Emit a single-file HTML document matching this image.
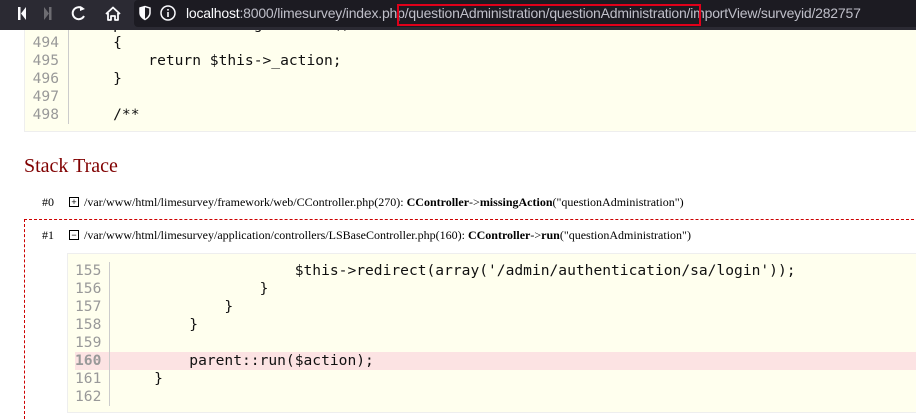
<!DOCTYPE html>
<html><head><meta charset="utf-8">
<style>
*{margin:0;padding:0;box-sizing:border-box}
body{width:916px;height:403px;overflow:hidden;background:#fff;position:relative;font-family:"Liberation Serif",serif}
.tb{position:absolute;left:0;top:0;width:916px;height:30px;background:#2b2a33;z-index:5;overflow:hidden}
.url{position:absolute;left:134px;top:0;width:782px;height:27px;background:#1c1b22;border-radius:4px 0 0 4px}
.urltext{position:absolute;left:186px;top:5px;font:14px "Liberation Sans",sans-serif;color:#bfbfc9;white-space:nowrap;letter-spacing:-0.2px}
.urltext b{font-weight:normal;color:#fbfbfe}
.redbox{position:absolute;left:397px;top:4px;width:304px;height:22px;border:2px solid #e0001a}
.code{position:absolute;background:#ffffee;border:1px solid #eeeeee;font-family:"DejaVu Sans Mono","Liberation Mono",monospace;font-size:14.6px;overflow:hidden}
.ln{position:absolute;left:0;height:18px;line-height:18px;white-space:pre;width:2000px}
.ln .n{display:inline-block;color:#999;text-align:right;border-right:1px solid #ccc;padding-right:9px;margin-right:9px}
.ln .c{color:#111}
.hl{background:#fce3e3}
.hl .n{font-weight:bold}
h1{position:absolute;left:24px;top:155px;font:normal 20px "Liberation Serif",serif;color:#800000}
.tr{position:absolute;font-size:12px;color:#000;white-space:nowrap}
.pm{display:inline-block;width:10px;height:10px;border:1px solid #000;position:absolute;font:9px/8px "Liberation Sans",sans-serif;text-align:center}
</style></head><body>
<div class="tb">
 <svg width="130" height="28" style="position:absolute;left:0;top:0">
  <g fill="#fbfbfe"><rect x="18" y="7" width="2.5" height="13"/><path d="M26 7 L21 13.5 L26 20 Z"/></g>
  <g fill="#6d6c72"><rect x="49" y="7" width="2.5" height="13"/><path d="M44 7 L49 13.5 L44 20 Z"/></g>
  <path d="M83 9 A6 6 0 1 0 84 16" fill="none" stroke="#fbfbfe" stroke-width="2"/><path d="M80 6 L85 9 L80 11 Z" fill="#fbfbfe"/>
  <path d="M106 14 L113 7.5 L120 14 M108 13 V20 H111 V16 H115 V20 H118 V13" fill="none" stroke="#fbfbfe" stroke-width="1.8" stroke-linejoin="round"/>
 </svg>
 <div class="url"></div>
 <svg width="60" height="28" style="position:absolute;left:134px;top:0">
  <path d="M6 8 L11 6.5 L16 8 V13 C16 16 13 18.5 11 19.5 C9 18.5 6 16 6 13 Z" fill="none" stroke="#fbfbfe" stroke-width="1.5"/>
  <path d="M11 7 V19 C9 18 6.5 16 6.5 13 V8.5 Z" fill="#fbfbfe"/>
  <circle cx="34" cy="13" r="7" fill="none" stroke="#fbfbfe" stroke-width="1.5"/>
  <rect x="33.2" y="12" width="1.6" height="5" fill="#fbfbfe"/><rect x="33.2" y="9" width="1.6" height="1.6" fill="#fbfbfe"/>
 </svg>
 <div class="urltext"><b>localhost</b>:8000/limesurvey/index.php/questionAdministration/questionAdministration/importView/surveyid/282757</div>
 <div class="redbox"></div>
</div>

<div class="code" style="left:24px;top:10px;width:900px;height:122px">
 <div class="ln" style="top:5px"><span class="n" style="width:44px">493</span><span class="c">    public function getAction()</span></div>
 <div class="ln" style="top:23px"><span class="n" style="width:44px">494</span><span class="c">    {</span></div>
 <div class="ln" style="top:41px"><span class="n" style="width:44px">495</span><span class="c">        return $this-&gt;_action;</span></div>
 <div class="ln" style="top:59px"><span class="n" style="width:44px">496</span><span class="c">    }</span></div>
 <div class="ln" style="top:77px"><span class="n" style="width:44px">497</span><span class="c"></span></div>
 <div class="ln" style="top:95px"><span class="n" style="width:44px">498</span><span class="c">    /**</span></div>
</div>

<h1>Stack Trace</h1>

<div class="tr" style="left:42px;top:195px">#0</div>
<div class="pm" style="left:69px;top:197px">+</div>
<div class="tr" style="left:84px;top:195px">/var/www/html/limesurvey/framework/web/CController.php(270): <b>CController</b>-&gt;<b>missingAction</b>("questionAdministration")</div>

<div style="position:absolute;left:24px;top:219px;width:900px;height:200px;border-top:1px dashed #c00;border-left:1px dashed #c00"></div>
<div class="tr" style="left:42px;top:228px">#1</div>
<div class="pm" style="left:69px;top:230px">−</div>
<div class="tr" style="left:84px;top:228px">/var/www/html/limesurvey/application/controllers/LSBaseController.php(160): <b>CController</b>-&gt;<b>run</b>("questionAdministration")</div>

<div class="code" style="left:67px;top:253px;width:860px;height:160px">
 <div class="ln" style="top:8px;left:7px"><span class="n" style="width:35px">155</span><span class="c">                    $this-&gt;redirect(array('/admin/authentication/sa/login'));</span></div>
 <div class="ln" style="top:26px;left:7px"><span class="n" style="width:35px">156</span><span class="c">                }</span></div>
 <div class="ln" style="top:44px;left:7px"><span class="n" style="width:35px">157</span><span class="c">            }</span></div>
 <div class="ln" style="top:62px;left:7px"><span class="n" style="width:35px">158</span><span class="c">        }</span></div>
 <div class="ln" style="top:80px;left:7px"><span class="n" style="width:35px">159</span><span class="c"></span></div>
 <div class="ln hl" style="top:98px;left:7px"><span class="n" style="width:35px">160</span><span class="c">        parent::run($action);</span></div>
 <div class="ln" style="top:116px;left:7px"><span class="n" style="width:35px">161</span><span class="c">    }</span></div>
 <div class="ln" style="top:134px;left:7px"><span class="n" style="width:35px">162</span><span class="c"></span></div>
</div>
</body></html>
